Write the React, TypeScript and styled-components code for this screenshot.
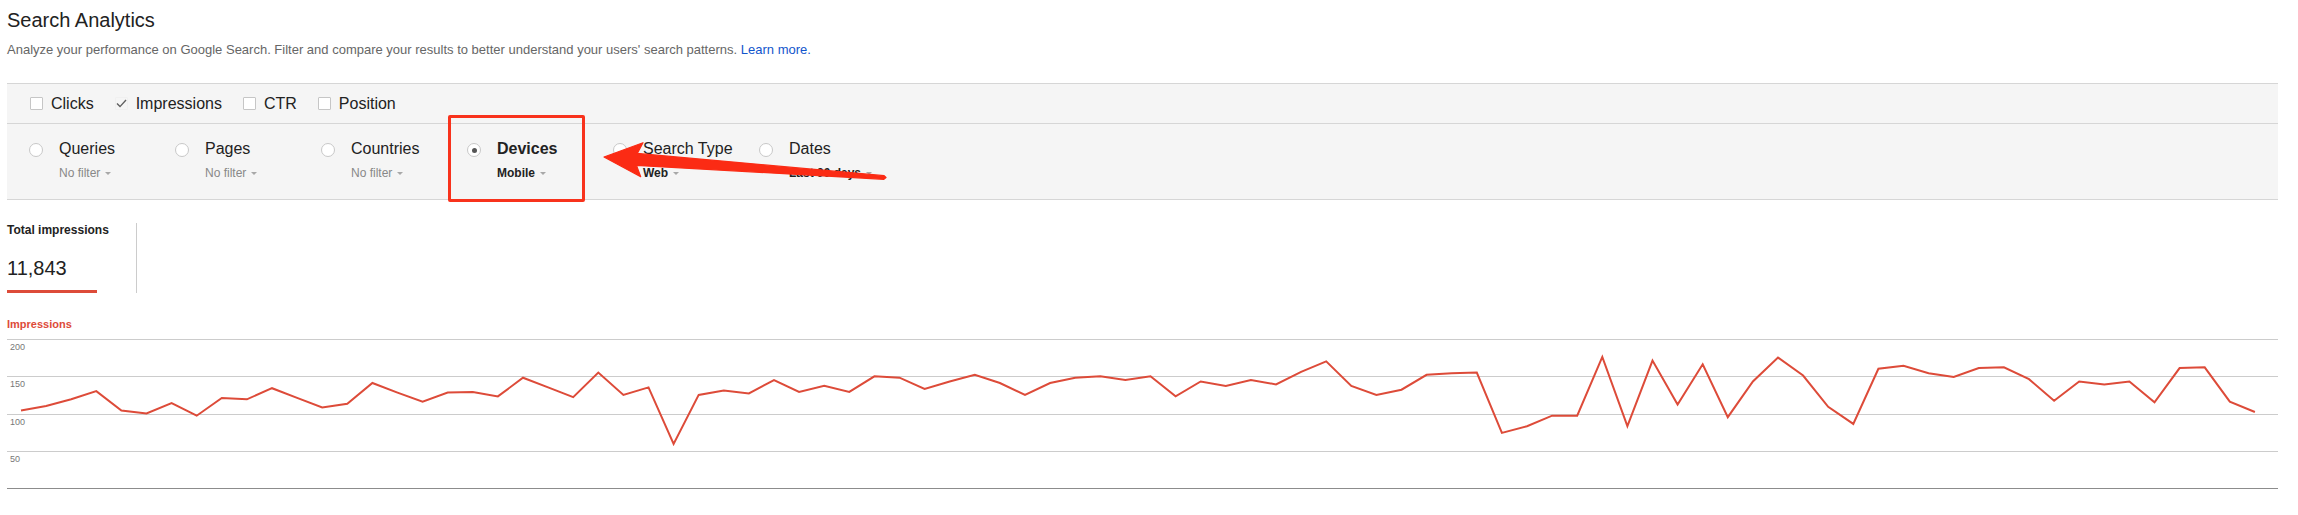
import React from "react";
import styled, { createGlobalStyle } from "styled-components";

const GlobalStyle = createGlobalStyle`
  html, body {
    margin: 0;
    padding: 0;
    background: #ffffff;
  }
  body {
    font-family: "Liberation Sans", Arial, Helvetica, sans-serif;
    color: #222222;
  }
`;

const impressions = [
  104, 110, 119, 130, 104, 100, 114, 97, 121, 119, 134, 121, 108, 113, 141,
  128, 116, 128, 129, 123, 148, 135, 122, 155, 125, 135, 59, 125, 131, 127,
  145, 129, 137, 129, 150, 148, 133, 143, 152, 141, 125, 141, 148, 150, 145,
  150, 123, 143, 137, 145, 139, 156, 170, 137, 125, 132, 152, 154, 155, 74,
  83, 97, 97, 176, 83, 171, 112, 166, 95, 143, 175, 151, 109, 86, 160, 164,
  154, 149, 161, 162, 146, 117, 143, 139, 143, 115, 161, 162, 116, 102,
];

const metrics = [
  { name: "Clicks", checked: false },
  { name: "Impressions", checked: true },
  { name: "CTR", checked: false },
  { name: "Position", checked: false },
];

const dimensions = [
  { name: "Queries", value: "No filter", active: false, set: false },
  { name: "Pages", value: "No filter", active: false, set: false },
  { name: "Countries", value: "No filter", active: false, set: false },
  { name: "Devices", value: "Mobile", active: true, set: true },
  { name: "Search Type", value: "Web", active: false, set: true },
  { name: "Dates", value: "Last 90 days", active: false, set: true },
];

const CHART_W = 2271;
const CHART_H = 149;

function linePoints() {
  return impressions
    .map((v, i) => {
      const x = 14 + i * 25.1;
      const y = CHART_H - (v / 200) * CHART_H;
      return `${x.toFixed(1)},${y.toFixed(1)}`;
    })
    .join(" ");
}

export default function App() {
  return (
    <Page>
      <GlobalStyle />
      <Title>Search Analytics</Title>
      <Intro>
        Analyze your performance on Google Search. Filter and compare your
        results to better understand your users' search patterns.{" "}
        <LearnMore href="#">Learn more.</LearnMore>
      </Intro>

      <FilterPanel>
        <MetricRow>
          {metrics.map((m) => (
            <MetricToggle key={m.name}>
              <Checkbox $checked={m.checked}>
                {m.checked && (
                  <svg width="11" height="9" viewBox="0 0 11 9">
                    <path
                      d="M1 4.6 L4 7.6 L10 1"
                      fill="none"
                      stroke="#5f5f5f"
                      strokeWidth="1.4"
                    />
                  </svg>
                )}
              </Checkbox>
              {m.name}
            </MetricToggle>
          ))}
        </MetricRow>

        <DimensionRow>
          {dimensions.map((d) => (
            <DimensionColumn key={d.name}>
              <Radio $active={d.active} />
              <DimensionText>
                <DimensionName $active={d.active}>{d.name}</DimensionName>
                <DimensionValue $set={d.set}>
                  {d.value}
                  <Caret />
                </DimensionValue>
              </DimensionText>
            </DimensionColumn>
          ))}
        </DimensionRow>

        <Highlight />
        <ArrowOverlay width="900" height="120" viewBox="0 0 900 120">
          <polygon
            points="597,73 636,58.7 630.3,69.4 877.1,91.7 879,93.5 876.9,95.3 629.5,81.4 633.7,92.7"
            fill="#fb2b14"
            stroke="#fb2b14"
            strokeWidth="1.2"
            strokeLinejoin="round"
          />
        </ArrowOverlay>
      </FilterPanel>

      <Scorecards>
        <Scorecard>
          <ScoreLabel>Total impressions</ScoreLabel>
          <ScoreValue>11,843</ScoreValue>
          <ScoreBar />
        </Scorecard>
      </Scorecards>

      <ChartLabel>Impressions</ChartLabel>
      <Chart>
        {["200", "150", "100", "50"].map((tick, i) => (
          <GridRow key={tick} $last={i === 3}>
            <Tick>{tick}</Tick>
          </GridRow>
        ))}
        <LineOverlay
          viewBox={`0 0 ${CHART_W} ${CHART_H}`}
          preserveAspectRatio="none"
        >
          <polyline
            points={linePoints()}
            fill="none"
            stroke="#dd4b39"
            strokeWidth="2"
            strokeLinejoin="miter"
          />
        </LineOverlay>
      </Chart>
    </Page>
  );
}

const Page = styled.div`
  width: 2298px;
  height: 515px;
  box-sizing: border-box;
  padding: 8px 20px 0 7px;
  overflow: hidden;
`;

const Title = styled.h1`
  margin: 0;
  font-size: 20px;
  line-height: 24px;
  font-weight: 400;
  color: #222222;
`;

const Intro = styled.p`
  margin: 10px 0 0;
  font-size: 13px;
  line-height: 16px;
  color: #666666;
`;

const LearnMore = styled.a`
  color: #1155cc;
  text-decoration: none;
`;

const FilterPanel = styled.div`
  position: relative;
  margin-top: 25px;
  background: #f5f5f5;
  border-top: 1px solid #d6d6d6;
  border-bottom: 1px solid #d6d6d6;
`;

const MetricRow = styled.div`
  display: flex;
  align-items: center;
  gap: 21px;
  height: 39px;
  padding-left: 23px;
  border-bottom: 1px solid #d6d6d6;
`;

const MetricToggle = styled.label`
  display: flex;
  align-items: center;
  gap: 8px;
  font-size: 16px;
  color: #222222;
`;

const Checkbox = styled.span<{ $checked: boolean }>`
  width: 13px;
  height: 13px;
  box-sizing: border-box;
  display: flex;
  align-items: center;
  justify-content: center;
  background: ${(p) => (p.$checked ? "#f5f5f5" : "#ffffff")};
  border: 1px solid ${(p) => (p.$checked ? "#f0f0f0" : "#c6c6c6")};
  border-radius: 1px;
`;

const DimensionRow = styled.div`
  display: flex;
  padding: 14.5px 0 18px 22px;
`;

const DimensionColumn = styled.div`
  display: flex;
  align-items: flex-start;
  width: 146px;
  gap: 16px;
`;

const Radio = styled.span<{ $active: boolean }>`
  position: relative;
  flex: none;
  width: 14px;
  height: 14px;
  margin-top: 4.5px;
  box-sizing: border-box;
  border-radius: 50%;
  background: #ffffff;
  border: 1px solid #c8c8c8;

  &::after {
    content: "";
    display: ${(p) => (p.$active ? "block" : "none")};
    position: absolute;
    left: 3.5px;
    top: 3.5px;
    width: 5px;
    height: 5px;
    border-radius: 50%;
    background: #555555;
  }
`;

const DimensionText = styled.div`
  display: flex;
  flex-direction: column;
  gap: 6.5px;
`;

const DimensionName = styled.div<{ $active: boolean }>`
  font-size: 16px;
  line-height: 20px;
  font-weight: ${(p) => (p.$active ? 700 : 400)};
  color: #222222;
  white-space: nowrap;
`;

const DimensionValue = styled.div<{ $set: boolean }>`
  display: flex;
  align-items: center;
  gap: 5px;
  font-size: 12px;
  line-height: 16px;
  font-weight: ${(p) => (p.$set ? 700 : 400)};
  color: ${(p) => (p.$set ? "#222222" : "#888888")};
  white-space: nowrap;
`;

const Caret = styled.span`
  width: 0;
  height: 0;
  margin-top: 1px;
  border-left: 3.5px solid transparent;
  border-right: 3.5px solid transparent;
  border-top: 3.5px solid #a8a8a8;
`;

const Highlight = styled.div`
  position: absolute;
  left: 441px;
  top: 31px;
  width: 137px;
  height: 87px;
  box-sizing: border-box;
  border: 3px solid #f8321c;
  border-radius: 2px;
  pointer-events: none;
`;

const ArrowOverlay = styled.svg`
  position: absolute;
  left: 0;
  top: 0;
  overflow: visible;
  pointer-events: none;
`;

const Scorecards = styled.div`
  display: flex;
  margin-top: 23px;
`;

const Scorecard = styled.div`
  width: 130px;
  height: 70px;
  box-sizing: border-box;
  border-right: 1px solid #cccccc;
  display: flex;
  flex-direction: column;
`;

const ScoreLabel = styled.div`
  font-size: 12px;
  line-height: 15px;
  font-weight: 700;
  color: #222222;
`;

const ScoreValue = styled.div`
  margin-top: 18px;
  font-size: 20px;
  line-height: 24px;
  color: #222222;
`;

const ScoreBar = styled.div`
  margin-top: 10px;
  width: 90px;
  height: 3px;
  background: #dd4b39;
`;

const ChartLabel = styled.div`
  margin-top: 25px;
  font-size: 11px;
  line-height: 13px;
  font-weight: 700;
  color: #dd4b39;
`;

const Chart = styled.div`
  position: relative;
  margin-top: 8px;
  width: ${CHART_W}px;
`;

const GridRow = styled.div<{ $last: boolean }>`
  height: ${(p) => (p.$last ? 38.25 : 37.25)}px;
  box-sizing: border-box;
  padding: 2px 0 0 3px;
  border-top: 1px solid #cccccc;
  border-bottom: ${(p) => (p.$last ? "1px solid #8c8c8c" : "none")};
`;

const Tick = styled.span`
  display: block;
  font-size: 9px;
  line-height: 10px;
  color: #777777;
`;

const LineOverlay = styled.svg`
  position: absolute;
  left: 0;
  top: 0;
  width: ${CHART_W}px;
  height: ${CHART_H}px;
  overflow: visible;
`;
